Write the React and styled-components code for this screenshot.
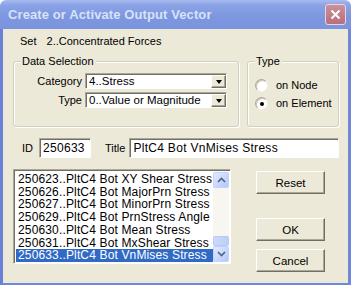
import React from 'react';
import styled, { createGlobalStyle } from 'styled-components';

const GlobalStyle = createGlobalStyle`
  html, body { margin: 0; padding: 0; background: #ffffff; }
  body {
    font-family: "Liberation Sans", Arial, sans-serif;
    font-size: 11px;
    color: #000;
  }
`;

const Window = styled.div`
  width: 351px;
  height: 285px;
  display: flex;
  flex-direction: column;
  overflow: hidden;
`;

const TitleBar = styled.div`
  height: 29px;
  flex: none;
  display: flex;
  align-items: center;
  justify-content: space-between;
  padding: 0 5px 0 8px;
  box-sizing: border-box;
  background: linear-gradient(180deg, #a8bbf0 0%, #8aa3e6 18%, #7c96df 60%, #7a94dd 100%);
  border-radius: 6px 6px 0 0;
`;

const Title = styled.span`
  font-family: "Liberation Sans", Arial, sans-serif;
  font-weight: bold;
  font-size: 13px;
  color: #d8e2f8;
  letter-spacing: 0.1px;
`;

const CloseButton = styled.div`
  width: 21px;
  height: 21px;
  box-sizing: border-box;
  border: 1px solid #e6d6e0;
  border-radius: 3px;
  background: linear-gradient(180deg, #c9909c 0%, #b96f7c 100%);
  display: flex;
  align-items: center;
  justify-content: center;
`;

const Frame = styled.div`
  flex: 1;
  display: flex;
  background: #ece9d8;
  border: 3px solid #7088dc;
  border-top: none;
  border-bottom-width: 2px;
  border-left-color: #6a7fd6;
`;

const Body = styled.div`
  flex: 1;
  display: flex;
  flex-direction: column;
  padding: 6px 0 0 10px;
`;

const SetRow = styled.div`
  display: flex;
  gap: 10px;
  padding-left: 7px;
  line-height: 13px;
`;

const GroupRow = styled.div`
  display: flex;
  gap: 8px;
  margin-top: 13px;
`;

const GroupBox = styled.div`
  position: relative;
  box-sizing: border-box;
  width: ${p => p.$width}px;
  height: 66px;
  border: 1px solid #d0d0bf;
  border-radius: 3px;
  box-shadow: inset 1px 1px 0 #ffffff, 1px 1px 0 #ffffff;
`;

const Legend = styled.span`
  position: absolute;
  top: -7px;
  left: 7px;
  padding: 0 2px 0 1px;
  background: #ece9d8;
  line-height: 13px;
`;

const FieldGrid = styled.div`
  display: grid;
  grid-template-columns: 1fr 142px;
  column-gap: 3px;
  row-gap: 3px;
  align-items: center;
  padding: 11px 11px 0 0;
`;

const Label = styled.span`
  text-align: right;
  line-height: 13px;
`;

const Sunken = styled.div`
  box-sizing: border-box;
  background: #fff;
  border-top: 1px solid #aca899;
  border-left: 1px solid #aca899;
  border-right: 1px solid #fff;
  border-bottom: 1px solid #fff;
  box-shadow: inset 1px 1px 0 #716f64;
`;

const Combo = styled(Sunken)`
  height: 16px;
  display: flex;
`;

const ComboText = styled.span`
  flex: 1;
  padding: 1px 0 0 3px;
  line-height: 13px;
  font-size: 11.5px;
  white-space: nowrap;
  overflow: hidden;
`;

const ComboArrow = styled.div`
  width: 15px;
  flex: none;
  box-sizing: border-box;
  margin: 1px 0 0 0;
  background: #ece9d8;
  border-top: 1px solid #fff;
  border-left: 1px solid #fff;
  border-right: 1px solid #716f64;
  border-bottom: 1px solid #716f64;
  box-shadow: inset -1px -1px 0 #aca899;
  display: flex;
  align-items: center;
  justify-content: center;
  &::after {
    content: "";
    border-left: 3.5px solid transparent;
    border-right: 3.5px solid transparent;
    border-top: 4px solid #000;
    margin-top: 1px;
  }
`;

const RadioList = styled.div`
  display: flex;
  flex-direction: column;
  gap: 5px;
  padding: 17px 0 0 7px;
`;

const RadioRow = styled.label`
  display: flex;
  align-items: center;
  gap: 8px;
  line-height: 13px;
`;

const RadioCircle = styled.span`
  width: 13px;
  height: 13px;
  box-sizing: border-box;
  border-radius: 50%;
  background: #fff;
  border: 1px solid;
  border-color: #aca899 #f1efe2 #f1efe2 #aca899;
  box-shadow: inset 1px 1px 0 #c9c6b6;
  display: flex;
  align-items: center;
  justify-content: center;
  &::after {
    content: "";
    width: 4px;
    height: 4px;
    border-radius: 50%;
    background: ${p => (p.$checked ? '#000' : 'transparent')};
  }
`;

const IdRow = styled.div`
  display: flex;
  align-items: center;
  margin-top: 11px;
  padding-left: 9px;
`;

const TextBox = styled(Sunken)`
  width: ${p => p.$width}px;
  height: 20px;
  padding: 3px 0 0 3px;
  line-height: 13px;
  font-size: 12px;
  letter-spacing: 0.3px;
  white-space: nowrap;
  overflow: hidden;
  margin-left: ${p => p.$gap}px;
`;

const BottomRow = styled.div`
  display: flex;
  margin-top: 11px;
`;

const ListBox = styled(Sunken)`
  width: 218px;
  height: 95px;
  display: flex;
  padding: 2px 1px 1px 2px;
`;

const Items = styled.div`
  flex: 1;
  display: flex;
  flex-direction: column;
  padding-top: 1px;
  overflow: hidden;
`;

const Item = styled.div`
  height: 13px;
  line-height: 13px;
  padding-left: 2px;
  font-size: 12px;
  letter-spacing: 0.15px;
  white-space: nowrap;
  overflow: hidden;
  background: ${p => (p.$selected ? '#316ac5' : 'transparent')};
  color: ${p => (p.$selected ? '#fff' : '#000')};
`;

const ScrollBar = styled.div`
  width: 16px;
  flex: none;
  display: flex;
  flex-direction: column;
  background: #f7f6f1;
`;

const ScrollButton = styled.div`
  height: 16px;
  box-sizing: border-box;
  border: 1px solid #c3d3fd;
  border-radius: 2px;
  background: linear-gradient(135deg, #e2ebff 0%, #c5d6fc 60%, #b4c8f6 100%);
  display: flex;
  align-items: center;
  justify-content: center;
`;

const Track = styled.div`
  flex: 1;
  display: flex;
  flex-direction: column;
  justify-content: flex-end;
`;

const Thumb = styled.div`
  height: 10px;
  box-sizing: border-box;
  border: 1px solid #b6c9f5;
  border-radius: 2px;
  background: linear-gradient(90deg, #cbdafc 0%, #bccffb 100%);
`;

const ButtonColumn = styled.div`
  display: flex;
  flex-direction: column;
  margin-left: 25px;
  padding-top: 2px;
`;

const Button = styled.div`
  width: 69px;
  height: 23px;
  box-sizing: border-box;
  background: #ece9d8;
  border-top: 1px solid #fff;
  border-left: 1px solid #fff;
  border-right: 1px solid #716f64;
  border-bottom: 1px solid #716f64;
  box-shadow: inset -1px -1px 0 #aca899;
  display: flex;
  align-items: center;
  justify-content: center;
  font-size: 11.5px;
  margin-top: ${p => p.$gap || 0}px;
`;

const Arrow = ({ up }) => (
  <svg width="9" height="6" viewBox="0 0 9 6">
    <path
      d={up ? 'M1 5 L4.5 1.5 L8 5' : 'M1 1 L4.5 4.5 L8 1'}
      fill="none"
      stroke="#4d6185"
      strokeWidth="1.6"
    />
  </svg>
);

const items = [
  '250623..PltC4 Bot XY Shear Stress',
  '250626..PltC4 Bot MajorPrn Stress',
  '250627..PltC4 Bot MinorPrn Stress',
  '250629..PltC4 Bot PrnStress Angle',
  '250630..PltC4 Bot Mean Stress',
  '250631..PltC4 Bot MxShear Stress',
  '250633..PltC4 Bot VnMises Stress',
];

export default function App() {
  return (
    <Window>
      <GlobalStyle />
      <TitleBar>
        <Title>Create or Activate Output Vector</Title>
        <CloseButton>
          <svg width="11" height="11" viewBox="0 0 11 11">
            <path d="M1.5 1.5 L9.5 9.5 M9.5 1.5 L1.5 9.5" stroke="#fff" strokeWidth="2" />
          </svg>
        </CloseButton>
      </TitleBar>
      <Frame>
        <Body>
          <SetRow>
            <span>Set</span>
            <span>2..Concentrated Forces</span>
          </SetRow>

          <GroupRow>
            <GroupBox $width={226}>
              <Legend>Data Selection</Legend>
              <FieldGrid>
                <Label>Category</Label>
                <Combo>
                  <ComboText>4..Stress</ComboText>
                  <ComboArrow />
                </Combo>
                <Label>Type</Label>
                <Combo>
                  <ComboText>0..Value or Magnitude</ComboText>
                  <ComboArrow />
                </Combo>
              </FieldGrid>
            </GroupBox>
            <GroupBox $width={92}>
              <Legend>Type</Legend>
              <RadioList>
                <RadioRow>
                  <RadioCircle />
                  <span>on Node</span>
                </RadioRow>
                <RadioRow>
                  <RadioCircle $checked />
                  <span>on Element</span>
                </RadioRow>
              </RadioList>
            </GroupBox>
          </GroupRow>

          <IdRow>
            <span>ID</span>
            <TextBox $width={52} $gap={6}>250633</TextBox>
            <span style={{ marginLeft: 14 }}>Title</span>
            <TextBox $width={210} $gap={4}>PltC4 Bot VnMises Stress</TextBox>
          </IdRow>

          <BottomRow>
            <ListBox>
              <Items>
                {items.map((t, i) => (
                  <Item key={t} $selected={i === items.length - 1}>{t}</Item>
                ))}
              </Items>
              <ScrollBar>
                <ScrollButton><Arrow up /></ScrollButton>
                <Track><Thumb /></Track>
                <ScrollButton><Arrow /></ScrollButton>
              </ScrollBar>
            </ListBox>
            <ButtonColumn>
              <Button>Reset</Button>
              <Button $gap={24}>OK</Button>
              <Button $gap={8}>Cancel</Button>
            </ButtonColumn>
          </BottomRow>
        </Body>
      </Frame>
    </Window>
  );
}
